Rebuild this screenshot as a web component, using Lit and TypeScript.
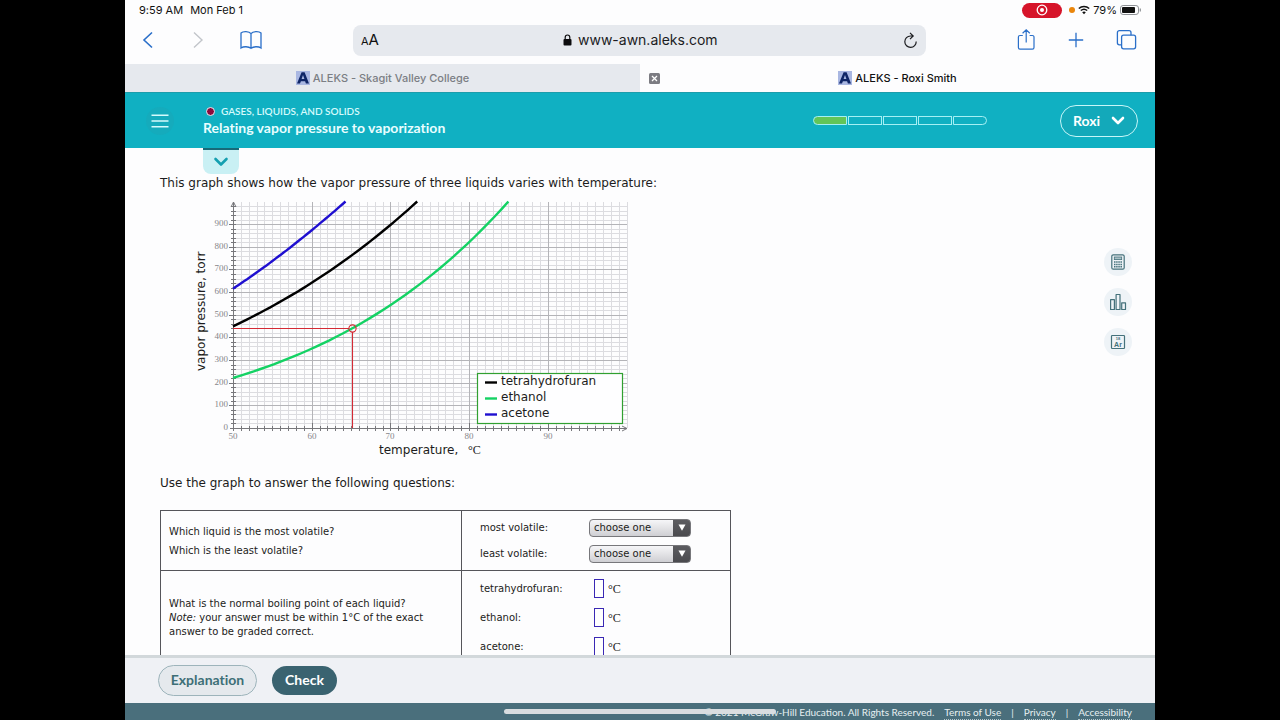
import { LitElement, html, css, svg } from "lit";
import { customElement } from "lit/decorators.js";

/* ---------- vapor pressure chart ---------- */

type Sample = [number, number];

const PLOT = { left: 43, bottom: 230, perDegree: 7.87, perTorr: 0.2265, right: 437, top: 4 };
const px = (t: number) => PLOT.left + (t - 50) * PLOT.perDegree;
const py = (p: number) => PLOT.bottom - p * PLOT.perTorr;

/* Pressure between samples follows a quadratic in ln(P). */
function pressure(samples: Sample[], t: number): number {
  let ln = 0;
  samples.forEach(([ti, pi], i) => {
    let w = 1;
    samples.forEach(([tj], j) => {
      if (i !== j) w *= (t - tj) / (ti - tj);
    });
    ln += w * Math.log(pi);
  });
  return Math.exp(ln);
}

function curve(samples: Sample[]): string {
  const end = samples[samples.length - 1][0];
  const steps = 40;
  const pts: string[] = [];
  for (let i = 0; i <= steps; i++) {
    const t = 50 + ((end - 50) * i) / steps;
    pts.push(`${px(t).toFixed(1)},${py(pressure(samples, t)).toFixed(1)}`);
  }
  return pts.join(" ");
}

const LIQUIDS: { name: string; color: string; samples: Sample[] }[] = [
  { name: "tetrahydrofuran", color: "#000000", samples: [[50, 449], [60, 641], [73.4, 1000]] },
  { name: "ethanol", color: "#14d264", samples: [[50, 221], [65.2, 441], [85, 1000]] },
  { name: "acetone", color: "#1f0fd0", samples: [[50, 615], [60, 873], [64.3, 1000]] },
];

@customElement("vapor-chart")
class VaporChart extends LitElement {
  static styles = css`
    :host { display: block; }
    svg { display: block; }
    .minor { stroke: #dcdce0; stroke-width: 1; }
    .major { stroke: #b4b4b8; stroke-width: 1; }
    .axis { stroke: #77777b; stroke-width: 1; fill: none; }
    .line { fill: none; stroke-width: 2.4; }
    .guide { stroke: #d42a35; stroke-width: 1.1; fill: none; }
    .tick { font: 9px "Liberation Serif", serif; fill: #86868a; }
    .label { font: 12px "DejaVu Sans", Verdana, sans-serif; fill: #1c1c20; }
    .serif { font: 12px "Liberation Serif", serif; fill: #1c1c20; }
    .legend { fill: #fefeff; stroke: #30a030; stroke-width: 1.2; }
  `;

  render() {
    const degrees = Array.from({ length: 50 }, (_, i) => 51 + i);
    const torrs = Array.from({ length: 49 }, (_, i) => 20 * (i + 1));
    const crisp = (v: number) => Math.round(v) + 0.5;
    return html`
      <svg width="440" height="262" viewBox="0 0 440 262" role="img" aria-label="Vapor pressure against temperature">
        ${torrs.map((p) => svg`<path class="minor" d="M${PLOT.left} ${crisp(py(p))}H${PLOT.right}"/>`)}
        ${degrees.map((t) => svg`<path class="minor" d="M${crisp(px(t))} ${PLOT.top}V${PLOT.bottom}"/>`)}
        ${torrs.filter((p) => p % 100 === 0).map((p) => svg`<path class="major" d="M${PLOT.left} ${crisp(py(p))}H${PLOT.right}"/>`)}
        ${degrees.filter((t) => t % 10 === 0 && t < 100).map((t) => svg`<path class="major" d="M${crisp(px(t))} ${PLOT.top}V${PLOT.bottom}"/>`)}
        <path class="axis" d="M43.5 4V233M40 230.5H437M41 9L43.5 4L46 9M432 228L437 230.5L432 233"/>
        ${torrs.map((p) => svg`<path class="axis" d="M${p % 100 === 0 ? 39 : 41} ${crisp(py(p))}H46"/>`)}
        ${degrees.filter((t) => t < 100).map((t) => svg`<path class="axis" d="M${crisp(px(t))} ${t % 10 === 0 ? 225 : 228}V233"/>`)}
        ${[0, 1, 2, 3, 4, 5, 6, 7, 8, 9].map((n) => svg`<text class="tick" x="38" y="${Math.round(py(n * 100)) + 2}" text-anchor="end">${n * 100}</text>`)}
        ${[50, 60, 70, 80, 90].map((t) => svg`<text class="tick" x="${Math.round(px(t))}" y="241" text-anchor="middle">${t}</text>`)}
        ${LIQUIDS.map((l) => svg`<polyline class="line" stroke="${l.color}" points="${curve(l.samples)}"/>`)}
        <path class="guide" d="M43 130.5H159M162.5 134V230"/>
        <circle class="guide" cx="162.5" cy="130.5" r="3.6"/>
        <rect class="legend" x="287.5" y="175.5" width="145" height="50"/>
        ${LIQUIDS.map((l, i) => svg`
          <path d="M295 ${184.5 + i * 16}H307" stroke="${l.color}" stroke-width="2.4"/>
          <text class="label" x="311" y="${187 + i * 16}">${l.name}</text>`)}
        <text class="label" x="189" y="256">temperature,</text>
        <text class="serif" x="278" y="256">°C</text>
        <text class="label" transform="translate(15 173) rotate(-90)">vapor pressure, torr</text>
      </svg>`;
  }
}

/* ---------- browser chrome ---------- */

const favicon = html`<svg class="favicon" width="14" height="14" viewBox="0 0 14 14" aria-hidden="true">
  <rect width="14" height="14" fill="#a9b7e2"/>
  <path d="M1 12.6L5.6 1.2H8.6L13 12.6H9.9L9.1 10.2H4.9L4 12.6ZM5.6 7.9H8.4L7 4.1Z" fill="#0e2566" fill-rule="evenodd"/>
</svg>`;

@customElement("browser-chrome")
class BrowserChrome extends LitElement {
  static styles = css`
    :host { display: block; background: #fdfdfe; color: #111; font-family: Inter, "Liberation Sans", sans-serif; }
    button { border: 0; background: none; padding: 0; color: inherit; font: inherit; display: grid; place-items: center; }
    svg { display: block; fill: none; }
    .status { display: flex; align-items: center; height: 20px; padding: 0 13px 0 14px; font-size: 11px; line-height: 20px; gap: 7px; }
    .indicators { margin-left: auto; display: flex; align-items: center; gap: 3px; }
    .record { width: 40px; height: 15px; border-radius: 8px; background: #d6142a; display: grid; place-items: center; margin-right: 4px; }
    .dot { width: 6px; height: 6px; border-radius: 50%; background: #ea860c; }
    .toolbar { display: flex; align-items: center; height: 44px; padding: 0 17px 4px 10px; box-sizing: border-box; }
    .group { display: flex; gap: 28px; color: #2a6fc9; }
    .group.end { gap: 26px; }
    .group button { width: 24px; height: 24px; }
    .group .off { color: #c2c5ca; }
    .address { flex: 1; height: 31px; margin: 0 88px 0 90px; border-radius: 8px; background: #e6e9ee; display: flex; align-items: center; justify-content: space-between; padding: 0 8px; }
    .reader { align-items: baseline; display: flex; font-size: 15px; line-height: 20px; }
    .reader small { font-size: 11px; }
    .site { display: flex; align-items: center; gap: 6px; }
    .site input { border: 0; background: none; padding: 0; width: 141px; font: 14px/20px Inter, "Liberation Sans", sans-serif; color: #1b1c1f; }
    .tabs { display: grid; grid-template-columns: 1fr 1fr; height: 28px; font-size: 11px; font-weight: 500; }
    .tab { display: grid; grid-template-columns: 28px 1fr 28px; align-items: center; }
    .tab.back { background: #e6e9ee; color: #7b7e84; }
    .name { display: flex; align-items: center; justify-content: center; gap: 3px; color: inherit; text-decoration: none; grid-column: 2; }
  `;

  render() {
    return html`
      <div class="status">
        <span>9:59 AM</span><span>Mon Feb 1</span>
        <div class="indicators">
          <span class="record"><svg width="12" height="12" viewBox="0 0 12 12"><circle cx="6" cy="6" r="4.8" stroke="#fff" stroke-width="1.3"/><circle cx="6" cy="6" r="2" fill="#fff"/></svg></span>
          <span class="dot"></span>
          <svg width="12" height="10" viewBox="0 0 12 10"><path d="M.8 3.5a7.6 7.6 0 0 1 10.4 0M2.8 5.6a4.8 4.8 0 0 1 6.4 0" stroke="#111" stroke-width="1.4"/><path d="M6 9.2L4.2 7.3a2.7 2.7 0 0 1 3.6 0Z" fill="#111"/></svg>
          <span>79%</span>
          <svg width="22" height="10" viewBox="0 0 22 10"><rect x=".5" y=".5" width="18" height="9" rx="2.6" stroke="#8d9095"/><rect x="2" y="2" width="13" height="6" rx="1" fill="#111"/><path d="M20.3 3.4v3.2" stroke="#8d9095" stroke-width="1.2"/></svg>
        </div>
      </div>
      <div class="toolbar">
        <div class="group">
          <button aria-label="Back"><svg width="24" height="24" viewBox="0 0 24 24" stroke="currentColor" stroke-width="1.6"><path d="M17 4.5L9 12L17 19.5"/></svg></button>
          <button class="off" aria-label="Forward"><svg width="24" height="24" viewBox="0 0 24 24" stroke="currentColor" stroke-width="1.4"><path d="M7 4.5L15 12L7 19.5"/></svg></button>
          <button aria-label="Bookmarks"><svg width="24" height="24" viewBox="0 0 24 24" stroke="currentColor" stroke-width="1.3"><path d="M12 5.6C10.2 3.2 4 3 2 5V20C4.500 18.300 9.500 18.300 12 20.300C14.500 18.300 19.500 18.300 22 20V5C20 3 13.800 3.200 12 5.600V20.300"/></svg></button>
        </div>
        <div class="address">
          <button class="reader" aria-label="Text size"><small>A</small>A</button>
          <label class="site">
            <svg width="9" height="12" viewBox="0 0 9 12" aria-label="Secure"><rect x=".5" y="5" width="8" height="6.600" rx="1" fill="#0c0c0e"/><path d="M2.200 5.500V3.300a2.300 2.300 0 0 1 4.600 0V5.500" stroke="#0c0c0e" stroke-width="1.200"/></svg>
            <input type="text" aria-label="Address" value="www-awn.aleks.com" />
          </label>
          <button aria-label="Reload"><svg width="15" height="17" viewBox="0 0 15 17" stroke="#1b1c1f" stroke-width="1.200"><path d="M9.500 4H7.500A5.700 5.700 0 1 0 13.200 9.500M7 .8L10.200 4L7 7.200"/></svg></button>
        </div>
        <div class="group end">
          <button aria-label="Share"><svg width="24" height="24" viewBox="0 0 24 24" stroke="currentColor" stroke-width="1.200"><path d="M8.800 7.500H6a1.600 1.600 0 0 0-1.600 1.600V19.500A1.600 1.600 0 0 0 6 21.100H18.400a1.600 1.600 0 0 0 1.600-1.600V9.100a1.600 1.600 0 0 0-1.600-1.600H15.600M12.200 14.500V2M8.600 5.300L12.200 1.800L15.800 5.300"/></svg></button>
          <button aria-label="New tab"><svg width="24" height="24" viewBox="0 0 24 24" stroke="currentColor" stroke-width="1.300"><path d="M12 4.800V19.200M4.800 12H19.200"/></svg></button>
          <button aria-label="Show tabs"><svg width="24" height="24" viewBox="0 0 24 24" stroke="currentColor" stroke-width="1.300"><rect x="7.600" y="7.200" width="14" height="13.600" rx="2"/><path d="M7.600 16.800H5.400a2 2 0 0 1-2-2V4.700a2 2 0 0 1 2-2H15a2 2 0 0 1 2 2V7.200"/></svg></button>
        </div>
      </div>
      <nav class="tabs">
        <div class="tab back"><a class="name" href="#college">${favicon}ALEKS - Skagit Valley College</a></div>
        <div class="tab">
          <button aria-label="Close tab"><svg width="11" height="11" viewBox="0 0 11 11"><rect width="11" height="11" rx="1.500" fill="#7c7c82"/><path d="M3 3L8 8M8 3L3 8" stroke="#fff" stroke-width="1.300"/></svg></button>
          <a class="name" href="#course">${favicon}ALEKS - Roxi Smith</a>
        </div>
      </nav>`;
  }
}

/* ---------- page ---------- */

@customElement("app-root")
class AppRoot extends LitElement {
  static styles = css`
    :host { display: block; background: #000; padding: 0 125px; font-variant-ligatures: none; --rounded: Lato, "Open Sans", sans-serif; --body: "DejaVu Sans", Verdana, sans-serif; }
    button { font: inherit; font-variant-ligatures: none; cursor: pointer; }
    .screen { display: flex; flex-direction: column; height: 100vh; background: #fdfdfe; position: relative; overflow: hidden; }
    .top { display: flex; align-items: center; height: 56px; flex: none; box-sizing: border-box; padding: 0 17px 0 21px; background: #10b0c2; border-top: 1px solid #1c9dab; color: #fff; font-family: var(--rounded); position: relative; }
    .menu { width: 28px; height: 28px; border: 0; border-radius: 50%; background: #15abbc; padding: 0; display: grid; place-items: center; }
    .heading { margin-left: 29px; }
    .topic { display: flex; align-items: center; gap: 6px; margin: 0; padding-left: 3px; font-size: 10px; line-height: 16px; font-weight: 600; color: #d6fafc; }
    .marker { width: 7px; height: 7px; border-radius: 50%; background: #8c0a3c; border: 1px solid #e2eef2; }
    .title { margin: 0; padding-bottom: 1px; font-size: 14px; line-height: 18px; font-weight: 700; color: #e9feff; }
    .progress { display: flex; gap: 1px; margin-left: auto; margin-right: 73px; }
    .step { width: 34px; height: 9px; box-sizing: border-box; border: 1px solid #a5f0f4; }
    .step:first-child { border-radius: 5px 0 0 5px; background: #62c558; }
    .step:last-child { border-radius: 0 5px 5px 0; }
    .user { display: flex; align-items: center; justify-content: center; gap: 11px; width: 78px; height: 32px; padding: 0; border: 1px solid #c6f6f8; border-radius: 16px; background: #13a9ba; color: #fff; font-size: 14px; font-weight: 700; }
    .drop { position: absolute; left: 78px; top: 55px; width: 36px; height: 26px; padding: 0; border: 0; border-top: 2px solid #176a78; border-radius: 0 0 8px 8px; background: #c9f0f4; display: grid; place-items: center; }
    .page { flex: 1; min-height: 0; overflow: hidden; display: flex; }
    .question { flex: 1; padding: 25px 0 0 35px; font: 12px/20px var(--body); color: #1c1c20; }
    .question p { margin: 0; }
    .question vapor-chart { margin: 5px 0 13px 30px; }
    .answers { width: 571px; margin-top: 17px; border-collapse: collapse; font-size: 10px; line-height: 14px; }
    .answers td { border: 1px solid #55555a; padding: 0 8px; box-sizing: border-box; }
    .answers td + td { padding: 0 18px; width: 269px; }
    .pick td { height: 60px; }
    .boil td { height: 94px; }
    .pick .prompt { line-height: 19px; }
    .row { display: grid; grid-template-columns: 109px 1fr; align-items: center; height: 26px; }
    .boil .row { height: 29px; }
    .select { position: relative; width: 102px; height: 18px; }
    .select select { appearance: none; display: block; width: 102px; height: 18px; padding: 0 20px 0 4px; border: 1px solid #77777b; border-radius: 4px; font: 10px/16px var(--body); color: #1c1c20; background: linear-gradient(#5c5c60, #4a4a4e) right / 17px 100% no-repeat, linear-gradient(#f6f6f8, #cfcfd3); }
    .select svg { position: absolute; right: 5px; top: 5px; pointer-events: none; }
    .unit { display: flex; align-items: center; gap: 4px; padding-left: 5px; font: 12px/14px "Liberation Serif", serif; }
    .unit input { width: 10px; height: 19px; box-sizing: border-box; border: 1px solid #3a28b4; padding: 0; background: #fff; font: 10px var(--body); }
    .tools { display: flex; flex-direction: column; gap: 12px; padding: 100px 23px 0 0; }
    .tool { width: 28px; height: 28px; padding: 0; border: 0; border-radius: 50%; background: #eef3f7; display: grid; place-items: center; }
    .tool svg { fill: none; stroke: #44717b; }
    .actions { flex: none; display: flex; align-items: center; gap: 15px; height: 48px; box-sizing: border-box; padding: 0 33px 1px; background: #eff1f5; border-top: 3px solid #d2d8db; font: 700 14px/20px var(--rounded); }
    .explain { width: 99px; height: 31px; padding: 0; border: 1px solid #9db4bb; border-radius: 16px; background: #e5e9ed; color: #3d6f77; }
    .check { width: 65px; height: 29px; padding: 0; border: 0; border-radius: 15px; background: #3a6370; color: #fff; }
    .legal { flex: none; display: flex; align-items: center; justify-content: flex-end; height: 17px; box-sizing: border-box; padding: 2px 23px 0; gap: 10px; background: #4a6f7c; color: #e6eff2; font: 10px/17px var(--rounded); overflow: hidden; }
    .legal a { color: inherit; text-decoration: none; border-bottom: 1px dotted #b5c7cd; line-height: 14px; }
    .home { position: absolute; left: 50%; bottom: 6px; width: 272px; height: 5px; margin-left: -136px; border-radius: 3px; background: #d9dde0; }
  `;

  private choice(id: string, label: string) {
    return html`<div class="row">
      <label for=${id}>${label}</label>
      <div class="select">
        <select id=${id}><option>choose one</option>${LIQUIDS.map((l) => html`<option>${l.name}</option>`)}</select>
        <svg width="8" height="7" viewBox="0 0 8 7"><path d="M.5 .5H7.500L4 6.800Z" fill="#fff"/></svg>
      </div>
    </div>`;
  }

  private boilingPoint(name: string) {
    return html`<div class="row">
      <label for=${name}>${name}:</label>
      <span class="unit"><input id=${name} type="text" />°C</span>
    </div>`;
  }

  render() {
    return html`
      <div class="screen">
        <browser-chrome></browser-chrome>
        <header class="top">
          <button class="menu" aria-label="Menu"><svg width="18" height="14" viewBox="0 0 18 14" stroke="#d5fbfc" stroke-width="1.400"><path d="M.5 1.200H17.500M.5 7H17.500M.5 12.800H17.500"/></svg></button>
          <div class="heading">
            <p class="topic"><span class="marker"></span>GASES, LIQUIDS, AND SOLIDS</p>
            <h1 class="title">Relating vapor pressure to vaporization</h1>
          </div>
          <div class="progress" role="img" aria-label="1 of 5">${[1, 2, 3, 4, 5].map(() => html`<span class="step"></span>`)}</div>
          <button class="user">Roxi<svg width="14" height="9" viewBox="0 0 14 9" fill="none" stroke="#fff" stroke-width="2.600" stroke-linecap="round" stroke-linejoin="round"><path d="M2 2L7 7L12 2"/></svg></button>
          <button class="drop" aria-label="Expand"><svg width="16" height="10" viewBox="0 0 16 10" fill="none" stroke="#149fb0" stroke-width="2.600" stroke-linecap="round" stroke-linejoin="round"><path d="M2.500 2L8 7.500L13.500 2"/></svg></button>
        </header>
        <main class="page">
          <section class="question">
            <p>This graph shows how the vapor pressure of three liquids varies with temperature:</p>
            <vapor-chart></vapor-chart>
            <p>Use the graph to answer the following questions:</p>
            <table class="answers">
              <tr class="pick">
                <td class="prompt">Which liquid is the most volatile?<br />Which is the least volatile?</td>
                <td>${this.choice("most", "most volatile:")}${this.choice("least", "least volatile:")}</td>
              </tr>
              <tr class="boil">
                <td>What is the normal boiling point of each liquid?<br /><em>Note:</em> your answer must be within 1°C of the exact<br />answer to be graded correct.</td>
                <td>${LIQUIDS.map((l) => this.boilingPoint(l.name))}</td>
              </tr>
            </table>
          </section>
          <aside class="tools">
            <button class="tool" aria-label="Calculator"><svg width="16" height="16" viewBox="0 0 16 16"><rect x="1.800" y=".8" width="12.400" height="14.400" rx="1.500" stroke-width="1.200"/><rect x="4.300" y="3" width="7.400" height="2.600" fill="#a9c0c6" stroke-width=".8"/><path d="M4 8H12M4 10.400H12M4 12.800H12" stroke-width="1.500" stroke-dasharray="1.500 .65"/></svg></button>
            <button class="tool" aria-label="Data"><svg width="18" height="18" viewBox="0 0 18 18"><path d="M1.600 6.700H5.400V16.500H1.600ZM7.100 1.500H11V16.500H7.100ZM12.700 9.800H16.500V16.500H12.700Z" stroke-width="1.200" stroke-linejoin="round"/></svg></button>
            <button class="tool" aria-label="Periodic table"><svg width="16" height="16" viewBox="0 0 16 16"><rect x="1.500" y="1.500" width="13" height="13" rx=".8" stroke-width="1.200"/><g fill="#44717b" stroke="none" text-anchor="middle" font-family="Liberation Sans, sans-serif" font-weight="700"><text x="8" y="5.800" font-size="4">18</text><text x="8" y="12.800" font-size="7">Ar</text></g></svg></button>
          </aside>
        </main>
        <div class="actions">
          <button class="explain">Explanation</button>
          <button class="check">Check</button>
        </div>
        <footer class="legal">
          <span>© 2021 McGraw-Hill Education. All Rights Reserved.</span>
          <a href="#terms">Terms of Use</a><span>|</span><a href="#privacy">Privacy</a><span>|</span><a href="#accessibility">Accessibility</a>
        </footer>
        <div class="home"></div>
      </div>`;
  }
}
